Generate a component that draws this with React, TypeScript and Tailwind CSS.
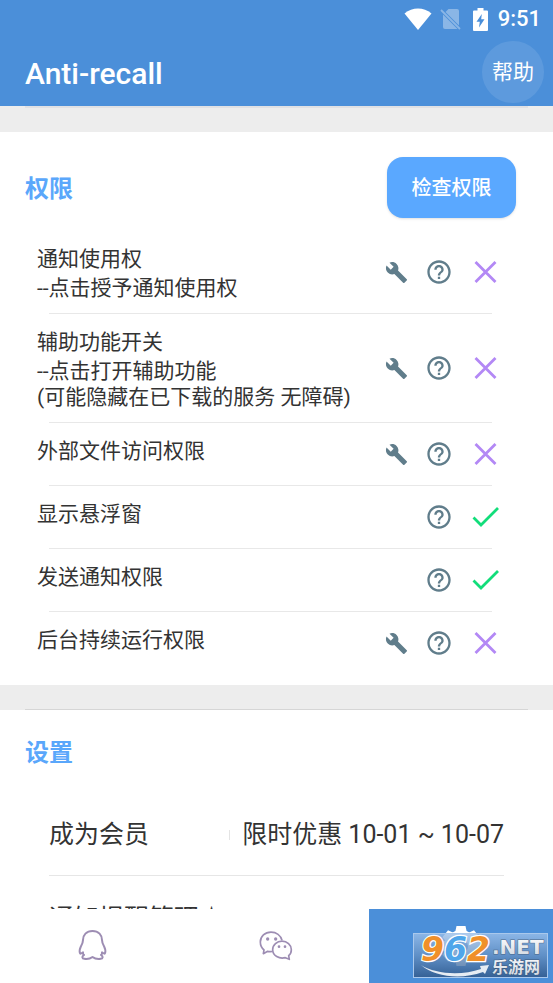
import { MdBuild, MdHelpOutline } from 'react-icons/md'

type Permission = {
  title: string
  hints?: string[]
  fixable: boolean
  granted: boolean
}

const permissions: Permission[] = [
  { title: '通知使用权', hints: ['--点击授予通知使用权'], fixable: true, granted: false },
  { title: '辅助功能开关', hints: ['--点击打开辅助功能', '(可能隐藏在已下载的服务 无障碍)'], fixable: true, granted: false },
  { title: '外部文件访问权限', fixable: true, granted: false },
  { title: '显示悬浮窗', fixable: false, granted: true },
  { title: '发送通知权限', fixable: false, granted: true },
  { title: '后台持续运行权限', fixable: true, granted: false },
]

function WifiIcon() {
  return (
    <svg viewBox="0 0 28 22" className="w-7 h-[22px]" fill="#fff">
      <path d="M0.5 5.5C8.5-1.2 19.500-1.2 27.500 5.500L14 22z" />
    </svg>
  )
}

function NoSimIcon() {
  return (
    <svg viewBox="0 0 21 22" className="w-[21px] h-[22px]" opacity="0.35">
      <path d="M8.500 1H17a2 2 0 0 1 2 2v14.500L5.500 4z" fill="#fff" />
      <path d="M3 6.500L17.500 21H5a2 2 0 0 1-2-2z" fill="#fff" />
      <path d="M1 2l19 19" stroke="#fff" strokeWidth="1.800" />
    </svg>
  )
}

function BatteryIcon() {
  return (
    <svg viewBox="0 0 15 23" className="w-[15px] h-[23px]">
      <path
        d="M4.500 0h6v2.500H14a1 1 0 0 1 1 1V22a1 1 0 0 1-1 1H1a1 1 0 0 1-1-1V3.500a1 1 0 0 1 1-1h3.500zM8.800 6L3.500 13.800h3.300L6 19.500l5.500-8.300H8.200z"
        fill="#fff"
        fillRule="evenodd"
      />
    </svg>
  )
}

function StatusMark({ granted }: { granted: boolean }) {
  return (
    <svg viewBox="0 0 28 28" className="w-7 h-7" fill="none" strokeWidth="2.800" role="img" aria-label={granted ? '已授权' : '未授权'}>
      {granted ? (
        <path d="M2.500 14.500l7.500 7.500L27 5" stroke="#12dd7a" />
      ) : (
        <path d="M4.500 4l20 20M24.500 4l-20 20" stroke="#b388f5" />
      )}
    </svg>
  )
}

function PermissionRow({ item }: { item: Permission }) {
  return (
    <li className="after:block after:h-px after:ml-[49px] after:mr-[61px] after:bg-[#e8e8e8] last:after:hidden">
      <div className="flex items-center min-h-[62px] pl-[37px] pr-[54px]">
        <div className="flex-1 self-stretch pt-3.5 pb-3 text-[21px] text-[#333]">
          <p className="leading-7">{item.title}</p>
          {item.hints && (
            <div className="mt-0.5 leading-[26px] whitespace-nowrap">
              {item.hints.map(h => <p key={h}>{h}</p>)}
            </div>
          )}
        </div>
        {item.fixable && (
          <button aria-label={`设置${item.title}`} className="w-7 h-7 mr-[15px] flex items-center justify-center shrink-0">
            <MdBuild className="w-[23px] h-[23px] text-[#607d8b]" />
          </button>
        )}
        <button aria-label={`${item.title}说明`} className="w-7 h-7 mr-[18px] shrink-0">
          <MdHelpOutline className="w-7 h-7 text-[#607d8b]" />
        </button>
        <span className="shrink-0"><StatusMark granted={item.granted} /></span>
      </div>
    </li>
  )
}

function PenguinIcon() {
  return (
    <svg viewBox="231 115 87 93" className="w-[29px] h-[31px]" fill="none" stroke="#9d8db3" strokeWidth="6" strokeLinejoin="round">
      <path d="M274.500 121C256 121 246 133 246 148C246 157 243 162 239 169C235 178 236 186 238 189C241 189 243 187 246 185C245 188 247 191 249 193C242 197 243 204 250 204.500C260 206 268 204 274.500 199C281 204 289 206 299 204.500C306 204 307 197 300 193C302 191 304 188 303 185C306 187 308 189 311 189C313 186 314 178 310 169C306 162 303 157 303 148C303 133 293 121 274.500 121z" />
    </svg>
  )
}

function ChatIcon() {
  return (
    <svg viewBox="90 122 102 93" className="w-[34px] h-[31px]" fill="none" stroke="#9d8db3" strokeWidth="5" strokeLinejoin="round">
      <path d="M130 186.500C124 187 120 187 116 186L103 193L105 182C98 176 94 167 94 158C94 141 108 128.500 126 128.500C142 128.500 155 138 159 153" />
      <path d="M159 155.500C174 155.500 187 166 187 181C187 189 184 195 179 199L181 210L169 205C151 210 131 199 131 181C131 166 144 155.500 159 155.500z" />
      <g fill="#9d8db3" stroke="none">
        <circle cx="116" cy="149" r="5" />
        <circle cx="140" cy="149" r="5" />
        <circle cx="150" cy="172" r="4" />
        <circle cx="168" cy="172" r="4" />
      </g>
    </svg>
  )
}

function GearIcon() {
  return (
    <svg viewBox="0 0 40 40" className="w-10 h-10">
      <circle cx="20" cy="20" r="11.500" fill="none" stroke="#fff" strokeWidth="9" />
      {[0, 52, 90, 128, 180, 232, 270, 308].map(a => (
        <path key={a} d="M14 7L15.500 0h9L26 7z" fill="#fff" transform={`rotate(${a} 20 20)`} />
      ))}
    </svg>
  )
}

function SiteBadge() {
  return (
    <svg viewBox="0 0 135 45" className="absolute right-[5px] bottom-[5px] w-[135px] h-[45px]" role="img" aria-label="962.NET 乐游网">
      <defs>
        <linearGradient id="badge" x1="0" y1="0" x2="0" y2="1">
          <stop offset="0" stopColor="#9cc0ea" />
          <stop offset="0.5" stopColor="#6590c2" />
          <stop offset="1" stopColor="#2f5585" />
        </linearGradient>
        <linearGradient id="silver" x1="0" y1="0" x2="0" y2="1">
          <stop offset="0" stopColor="#ffffff" />
          <stop offset="1" stopColor="#cdd5de" />
        </linearGradient>
      </defs>
      <rect x="0.500" y="0.500" width="134" height="44" fill="url(#badge)" fillOpacity="0.8" stroke="#a9c8ec" />
      <path d="M8 32C22 41 48 43 68 36L67 33L76 32L72 41L70 39C48 47 22 44 8 32z" fill="#e6ecf3" />
      <g fontFamily="DejaVu Sans" fontWeight="700">
        <text x="8" y="28" fontSize="33" fontStyle="italic" stroke="#fff" strokeWidth="2.500" paintOrder="stroke">
          <tspan fill="#f0902a">9</tspan>
          <tspan fill="#4fa6ea">6</tspan>
          <tspan fill="#f0902a">2</tspan>
        </text>
        <text x="79" y="21" fontSize="20" fill="url(#silver)" stroke="#4b6585" strokeWidth="1" paintOrder="stroke">.NET</text>
      </g>
      <text x="79" y="40" fontSize="16" fontWeight="700" fontFamily="Noto Sans CJK SC" fill="url(#silver)" stroke="#3c597c" strokeWidth="1" paintOrder="stroke">
        乐游网
      </text>
    </svg>
  )
}

export default function App() {
  return (
    <div className="h-screen flex flex-col bg-white font-['Roboto','Noto_Sans_CJK_SC',sans-serif] text-[#333]">
      <header className="bg-[#4b8fd9] text-white shrink-0">
        {/* Status bar */}
        <div className="h-[38px] flex items-center justify-end pr-3">
          <WifiIcon />
          <span className="ml-2"><NoSimIcon /></span>
          <span className="ml-3"><BatteryIcon /></span>
          <span className="ml-2.5 text-[22px] font-medium leading-none">9:51</span>
        </div>
        {/* Title bar */}
        <div className="h-[68px] flex items-center justify-between pl-[25px] pr-[9px]">
          <h1 className="pt-0.5 text-[30px] font-medium">Anti-recall</h1>
          <button className="w-[62px] h-[62px] rounded-full bg-white/10 pt-0.5 text-[21px]">帮助</button>
        </div>
      </header>

      <main className="flex-1 min-h-0 overflow-hidden">
        <div className="h-[26px] px-[25px] bg-[#ededed]">
          <div className="h-0.5 bg-[#e0e1e4]" />
        </div>

        <section className="pb-[11px]">
          <div className="flex items-center justify-between pt-[25px] pb-[13px] pl-[25px] pr-[37px]">
            <h2 className="pt-0.5 text-2xl font-bold text-[#5aa7fb]">权限</h2>
            <button className="w-[129px] h-[61px] rounded-2xl bg-[#5aa8ff] text-white text-xl font-medium shadow-sm">
              检查权限
            </button>
          </div>
          <ul>
            {permissions.map(p => <PermissionRow key={p.title} item={p} />)}
          </ul>
        </section>

        <div className="h-[25px] px-[25px] bg-[#ededed] flex items-end">
          <div className="flex-1 h-px bg-[#d6d6d6]" />
        </div>

        <section>
          <h2 className="h-[83px] flex items-center pt-0.5 pl-[25px] text-2xl font-bold text-[#5aa7fb]">设置</h2>
          <div className="ml-[49px] mr-[49px] text-[25px] whitespace-nowrap">
            <div className="h-[83px] flex items-center pt-0.5 border-b border-[#e6e6e6]">
              <span className="flex-1">成为会员</span>
              <span className="w-px h-2.5 mr-3 bg-[#e4e4e4]" />
              <span>限时优惠 10-01 ~ 10-07</span>
            </div>
            <div className="h-[83px] flex items-center pt-0.5">通知提醒管理☆</div>
          </div>
        </section>
      </main>

      <nav className="grid grid-cols-3 h-[74px] shrink-0 bg-white">
        <button aria-label="QQ" className="flex items-center justify-center pb-1"><PenguinIcon /></button>
        <button aria-label="微信" className="flex items-center justify-center pb-0.5"><ChatIcon /></button>
        <button aria-label="设置" className="relative flex items-center justify-center bg-[#4b8fd9]">
          <GearIcon />
          <SiteBadge />
        </button>
      </nav>
    </div>
  )
}
